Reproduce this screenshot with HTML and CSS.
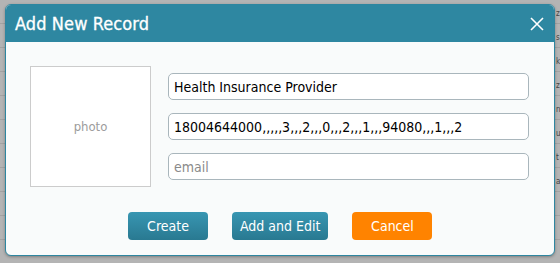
FILE: index.html
```html
<!DOCTYPE html>
<html lang="en">
<head>
  <meta charset="UTF-8">
  <title>Add New Record</title>
  <link rel="stylesheet" href="styles.css">
</head>
<body>

  <!-- page behind the overlay -->
  <div id="backdrop">
    <div class="row"><span></span><span class="peek">z</span></div>
    <div class="row"><span></span><span class="peek">s</span></div>
    <div class="row"><span></span><span class="peek">k</span></div>
    <div class="row"><span></span><span class="peek">z</span></div>
    <div class="row"><span></span><span class="peek">n</span></div>
    <div class="row"><span></span><span class="peek">u</span></div>
    <div class="row"><span></span><span class="peek">t</span></div>
    <div class="row"><span></span><span class="peek">a</span></div>
    <div class="row"><span></span><span></span></div>
    <div class="row"><span></span><span></span></div>
    <div class="row"><span></span><span></span></div>
  </div>

  <!-- DIALOG -->
  <div id="dialog">
    <div class="dlg-head">
      <span class="dlg-title">Add New Record</span>
      <button class="dlg-close" aria-label="close">
        <svg width="14" height="14" viewBox="0 0 14 14"><path d="M1 1L13 13M13 1L1 13" stroke="#fff" stroke-width="1.6" fill="none"/></svg>
      </button>
    </div>
    <div class="dlg-body">
      <div class="photo">photo</div>
      <div class="fields">
        <input class="fld" value="Health Insurance Provider">
        <input class="fld" value="18004644000,,,,,3,,,2,,,0,,,2,,,1,,,94080,,,1,,,2">
        <input class="fld" placeholder="email">
      </div>
    </div>
    <div class="dlg-foot">
      <button class="btn teal w80">Create</button>
      <button class="btn teal">Add and Edit</button>
      <button class="btn orange w80">Cancel</button>
    </div>
  </div>

</body>
</html>
```
FILE: styles.css
```css
body { margin:0; background:#b4b4b4; width:560px; height:263px; overflow:hidden;
       font-family:'DejaVu Sans Condensed','DejaVu Sans',sans-serif; position:relative; }

.row { display:grid; grid-template-columns:556px 4px; height:23px;
       border-bottom:1px solid #a2a2a2; font-size:15px; color:#444;
       line-height:28px; }
.row span { overflow:hidden; white-space:nowrap; }
.peek { font-size:8px; }

#dialog {
  position:absolute; left:5px; top:4px; width:548px; height:250px;
  border:1px solid #2e86a0; border-radius:6px; background:#f9fbfb;
  overflow:hidden; box-shadow:0 1px 3px rgba(0,0,0,0.3);
  display:flex; flex-direction:column;
}
.dlg-head {
  background:#2e87a1; height:37px; display:flex; align-items:center;
  justify-content:space-between; padding:0 8px 0 9px;
}
.dlg-title { color:#fff; font-size:18px; letter-spacing:0.1px; -webkit-text-stroke:0.3px #fff; }
.dlg-close { background:none; border:none; padding:0; width:18px; height:18px;
             display:flex; align-items:center; justify-content:center; cursor:pointer; }

.dlg-body { display:flex; padding:24px 25px 0 24px; gap:17px; }
.photo {
  width:119px; height:119px; border:1px solid #cccccc; background:#fff;
  display:flex; align-items:center; justify-content:center;
  color:#9c9c9c; font-size:13px;
}
.fields { flex:1; display:flex; flex-direction:column; gap:13px; padding-top:7px; }
.fld {
  height:27px; box-sizing:border-box; border:1px solid #a9b6bc; border-radius:5px;
  background:#fff; padding:0 5px; font-family:inherit; font-size:14px; color:#000;
}
.fld::placeholder { color:#8a8a8a; }

.dlg-foot { display:flex; gap:24px; padding:25px 0 0 122px; }
.btn {
  height:28px; border:none; border-radius:4px; color:#fff; font-family:inherit;
  font-size:14px; padding:0 8px; cursor:pointer;
}
.w80 { width:80px; }
.teal { background:linear-gradient(#3896b2,#297991); }
.orange { background:#ff8300; }
```
